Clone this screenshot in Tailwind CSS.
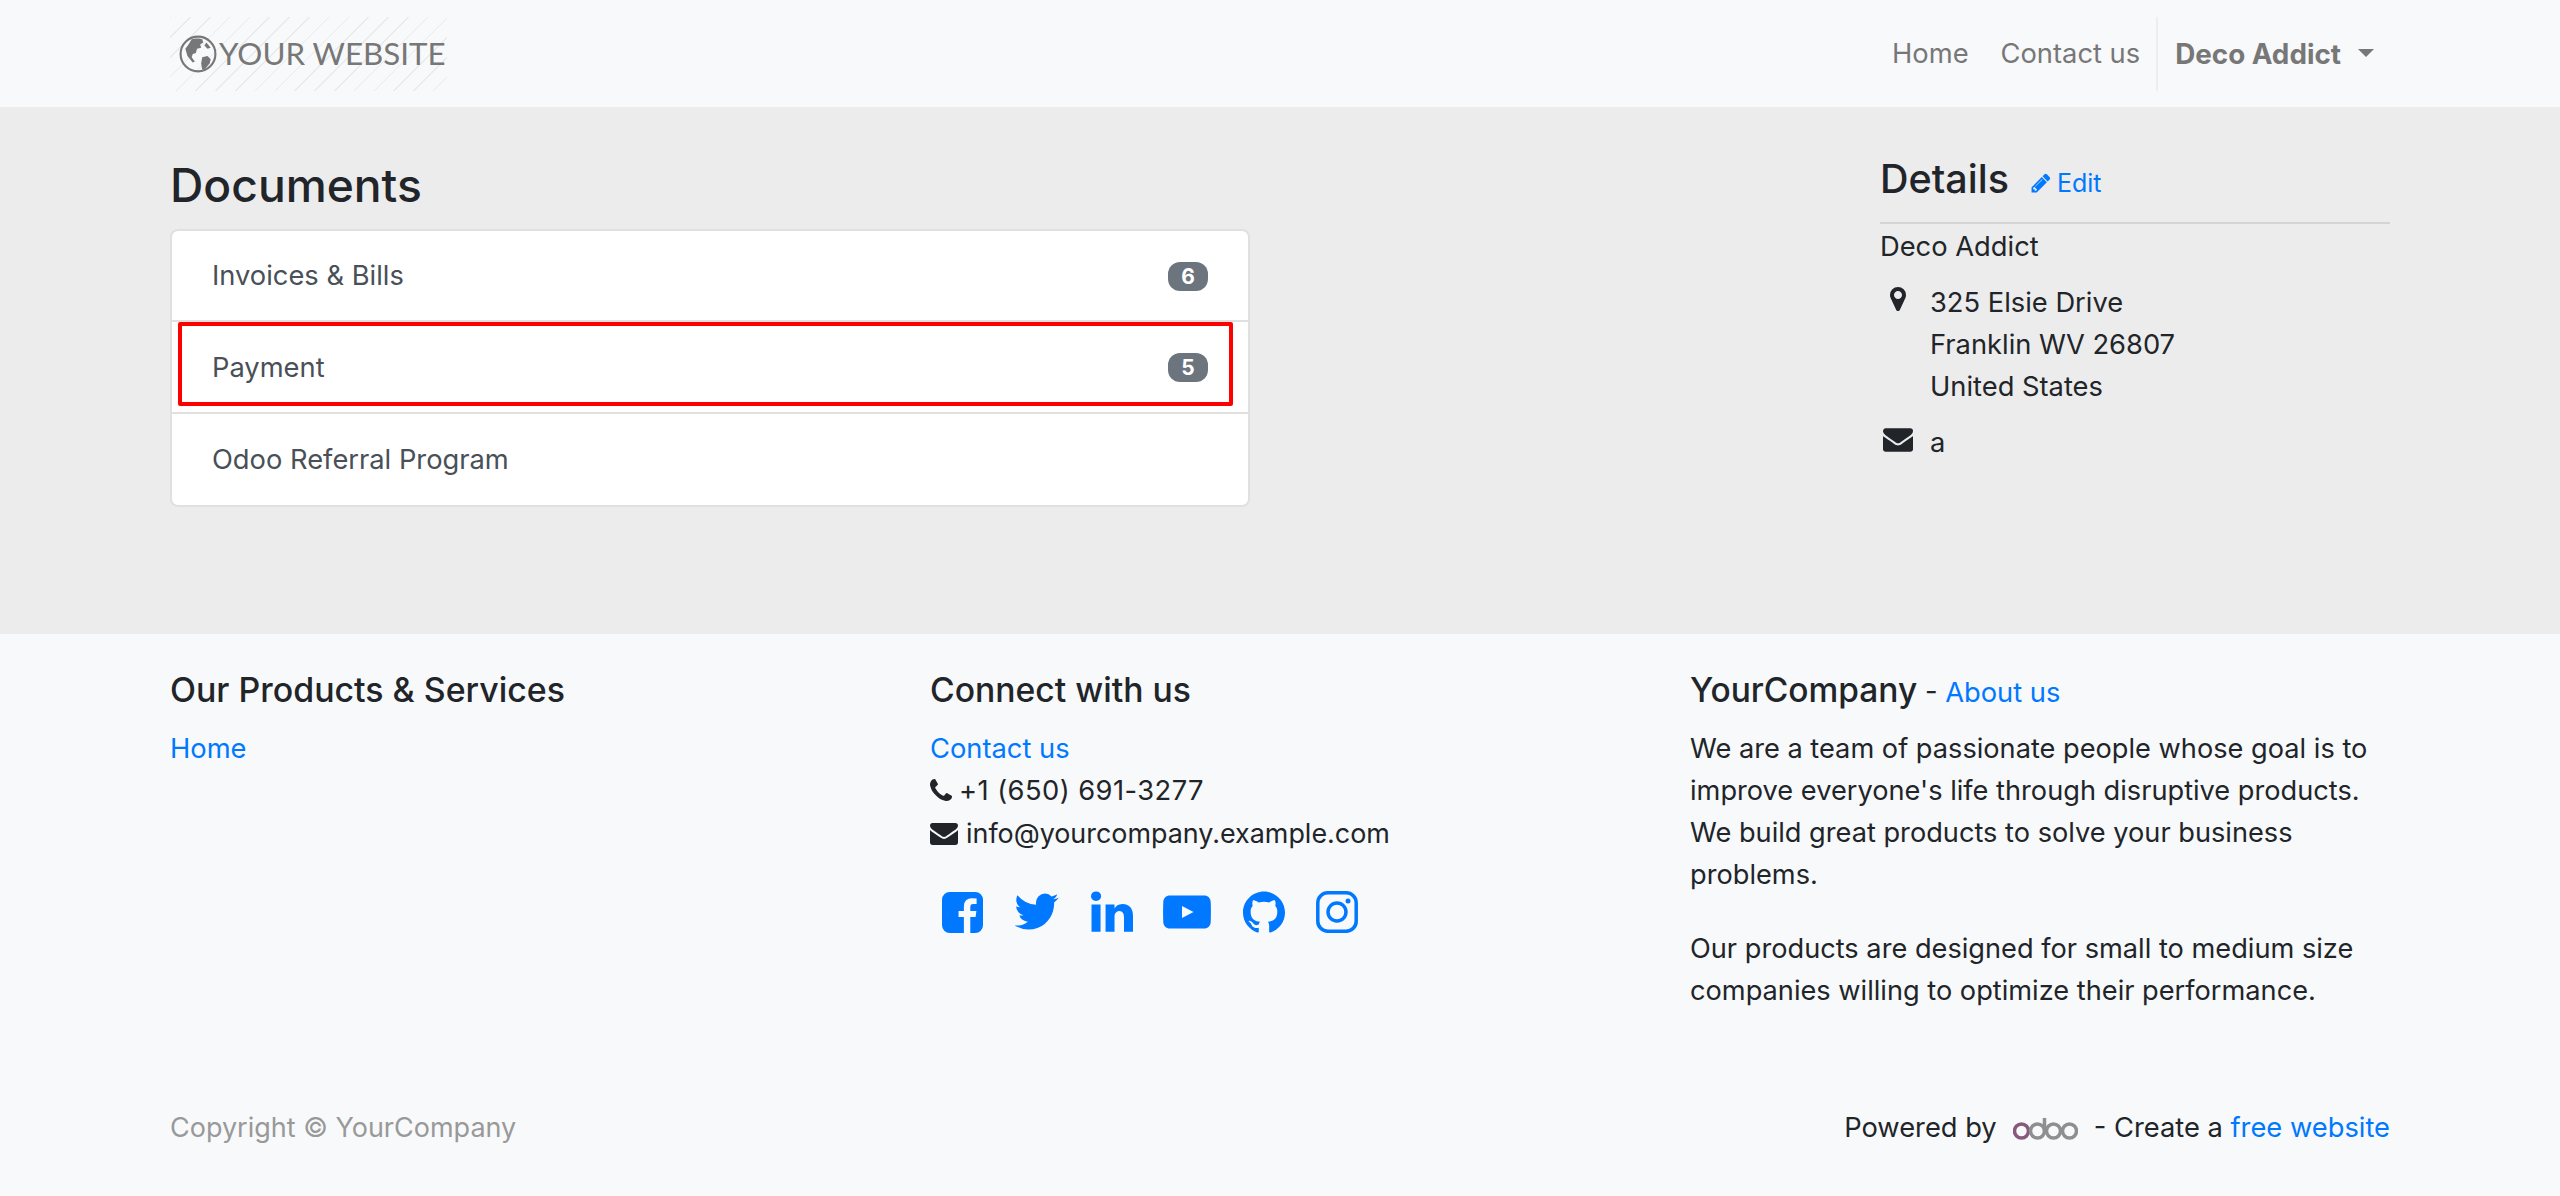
<!DOCTYPE html>
<html lang="en">
<head>
    <meta charset="UTF-8">
    <meta name="viewport" content="width=device-width, initial-scale=1.0">
    <title>Documents</title>
    <script src="https://cdn.jsdelivr.net/npm/@tailwindcss/browser@4"></script>
</head>
<body class="bg-[#f8f9fb] text-[#212529] font-[Inter,sans-serif] text-[27.3px] leading-[42px]">
    <!-- navbar -->
    <header class="h-[107px] px-[170px] flex items-center justify-between">
        <a class="w-[277px] h-[74px] flex items-center pl-[9px] gap-[2px] bg-[repeating-linear-gradient(135deg,#e8eaec_0,#e8eaec_1px,transparent_1px,transparent_14px)]">
            <svg class="w-[38px] h-[38px] shrink-0" viewBox="0 0 36 36" fill="#777">
                <circle cx="18" cy="18" r="16.500" fill="none" stroke="#777" stroke-width="2"/>
                <path d="M12 4c3-1 8-1 10 0l1 3-3 2 1 3-4 1-1 4-3 1-1 3 3 4-2 1-5-6-2-7 3-4z"/>
                <path d="M22 21l5-1 3 3-1 4-4 5-3 1-1-6z"/>
                <path d="M26 7l4 5-3 1-3-3z"/>
            </svg>
            <span class="font-[Lato,sans-serif] text-[31.3px] text-[#777] leading-none whitespace-nowrap">YOUR WEBSITE</span>
        </a>
        <nav class="flex items-center text-[#777] h-[74px]">
            <a class="mr-[32px] mt-[1px]">Home</a>
            <a class="mr-[16px] mt-[1px]">Contact us</a>
            <div class="w-[2px] h-[74px] bg-[#eceef0]"></div>
            <a class="ml-[17px] mt-[1px] font-bold text-[27.8px] flex items-center">Deco Addict<span class="ml-[17px] mb-[3px] border-t-[8px] border-x-[8px] border-t-[#777] border-x-transparent"></span></a>
            <div class="w-[16px]"></div>
        </nav>
    </header>

    <!-- portal content -->
    <main class="h-[527px] bg-[#ececec] px-[170px] flex justify-between">
        <section class="w-[1080px]">
            <h1 class="text-[46.2px] leading-[54px] font-medium mt-[51px] mb-[17px]">Documents</h1>
            <div class="relative bg-white border-2 border-[#e0e0e0] rounded-[8px] text-[#495057]">
                <div class="h-[91px] px-[40px] pt-[1px] flex items-center justify-between border-b-2 border-[#e0e0e0]">
                    <span>Invoices &amp; Bills</span>
                    <span class="w-[40px] h-[29px] rounded-[12px] bg-[#6c757d] text-white text-[21px] leading-[29px] font-bold text-center">6</span>
                </div>
                <div class="h-[92px] px-[40px] pt-[1px] flex items-center justify-between border-b-2 border-[#e0e0e0]">
                    <span>Payment</span>
                    <span class="w-[40px] h-[29px] rounded-[12px] bg-[#6c757d] text-white text-[21px] leading-[29px] font-bold text-center">5</span>
                </div>
                <div class="h-[91px] px-[40px] pt-[1px] flex items-center">
                    <span>Odoo Referral Program</span>
                </div>
                <!-- red highlight drawn over the row -->
                <div class="absolute left-[6px] right-[15px] top-[91px] h-[84px] border-[4px] border-[#ff0000] rounded-[2px]"></div>
            </div>
        </section>

        <aside class="w-[510px]">
            <div class="mt-[48px] h-[69px] flex items-start border-b-2 border-[#d4d4d4]">
                <h2 class="text-[39.5px] leading-[48px] font-medium">Details</h2>
                <a class="ml-[21px] mt-[9px] flex items-center text-[#0078ff] text-[25px] leading-[38px]">
                    <svg class="w-[22px] h-[22px] mr-[5px]" viewBox="0 0 1792 1792" fill="currentColor"><path d="M491 1536l91-91-235-235-91 91v107h128v128h107zm523-928q0-22-22-22-10 0-17 7l-542 542q-7 7-7 17 0 22 22 22 10 0 17-7l542-542q7-7 7-17zm-54-192l416 416-832 832h-416v-416zm683 96q0 53-37 90l-166 166-416-416 166-165q36-38 90-38 53 0 91 38l235 234q37 39 37 91z"/></svg>Edit
                </a>
            </div>
            <div class="mt-[2px]">Deco Addict</div>
            <div class="flex mt-[14px]">
                <div class="w-[50px] shrink-0 pt-[3px] pl-[4px]">
                    <svg class="w-[28px] h-[28px]" viewBox="0 0 1792 1792" fill="currentColor"><path d="M1152 640q0-106-75-181t-181-75-181 75-75 181 75 181 181 75 181-75 75-181zm256 0q0 109-33 179l-364 774q-16 33-47.500 52t-67.500 19-67.500-19-46.500-52l-365-774q-33-70-33-179 0-212 150-362t362-150 362 150 150 362z"/></svg>
                </div>
                <div>325 Elsie Drive<br>Franklin WV 26807<br>United States</div>
            </div>
            <div class="flex mt-[14px]">
                <div class="w-[50px] shrink-0 pt-[2px] pl-[3px]">
                    <svg class="w-[30px] h-[30px]" viewBox="0 0 1792 1792" fill="currentColor"><path d="M1792 710v794q0 66-47 113t-113 47h-1472q-66 0-113-47t-47-113v-794q44 49 101 87 362 246 497 345 57 42 92.500 65.500t94.500 48 110 24.500h2q51 0 110-24.500t94.500-48 92.500-65.500q170-123 498-345 57-39 100-87zm0-294q0 79-49 151t-122 123q-376 261-468 325-10 7-42.500 30.500t-54 38-52 32.500-57.500 27-50 9h-2q-23 0-50-9t-57.500-27-52-32.500-54-38-42.500-30.500q-91-64-262-182.500t-205-142.500q-62-42-117-115.500t-55-136.500q0-78 41.500-130t118.500-52h1472q65 0 112.500 47t47.500 113z"/></svg>
                </div>
                <div>a</div>
            </div>
        </aside>
    </main>

    <!-- footer -->
    <footer class="h-[562px] px-[170px] pt-[32px] flex flex-col">
        <div class="grid grid-cols-[760px_760px_700px]">
            <div>
                <h5 class="text-[33.9px] leading-[48px] font-medium mb-[14px]">Our Products &amp; Services</h5>
                <a class="block text-[#0078ff]">Home</a>
            </div>
            <div>
                <h5 class="text-[33.7px] leading-[48px] font-medium mb-[14px]">Connect with us</h5>
                <a class="block text-[#0078ff]">Contact us</a>
                <div class="flex items-center">
                    <svg class="w-[28px] h-[28px] mr-[4px] -ml-[3px]" viewBox="0 0 1792 1792" fill="currentColor"><path d="M1600 1240q0 27-10 70.500t-21 68.500q-21 50-122 106-94 51-186 51-27 0-53-3.500t-57.500-12.500-47-14.500-55.500-20.500-49-18q-98-35-175-83-127-79-264-216t-216-264q-48-77-83-175-3-9-18-49t-20.500-55.500-14.500-47-12.500-57.500-3.500-53q0-92 51-186 56-101 106-122 25-11 68.500-21t70.500-10q14 0 21 3 18 6 53 76 11 19 30 54t35 63.500 31 53.500q3 4 17.500 25t21.500 35.500 7 28.500q0 20-28.500 50t-62 55-62 53-28.500 46q0 9 5 22.500t8.500 20.500 14 24 11.500 19q76 137 174 235t235 174q2 1 19 11.500t24 14 20.500 8.500 22.500 5q18 0 46-28.500t53-62 55-62 50-28.500q14 0 28.500 7t35.500 21.500 25 17.500q25 15 53.500 31t63.500 35 54 30q70 35 76 53 3 7 3 21z"/></svg>
                    <span class="tracking-[0.45px]">+1 (650) 691-3277</span>
                </div>
                <div class="flex items-center">
                    <svg class="w-[28px] h-[28px] mr-[8px]" viewBox="0 0 1792 1792" fill="currentColor"><path d="M1792 710v794q0 66-47 113t-113 47h-1472q-66 0-113-47t-47-113v-794q44 49 101 87 362 246 497 345 57 42 92.500 65.500t94.500 48 110 24.500h2q51 0 110-24.500t94.500-48 92.500-65.500q170-123 498-345 57-39 100-87zm0-294q0 79-49 151t-122 123q-376 261-468 325-10 7-42.500 30.500t-54 38-52 32.500-57.500 27-50 9h-2q-23 0-50-9t-57.500-27-52-32.500-54-38-42.500-30.500q-91-64-262-182.500t-205-142.500q-62-42-117-115.500t-55-136.500q0-78 41.500-130t118.500-52h1472q65 0 112.500 47t47.500 113z"/></svg>
                    <span class="text-[26.9px]">info@yourcompany.example.com</span>
                </div>
                <div class="flex gap-[11px] mt-[37px] text-[#0078ff]">
                    <a class="w-[64px] h-[42px] flex justify-center items-center">
                        <svg class="w-[41px] h-[41px] ml-[1px]" viewBox="128 128 1536 1536" fill="currentColor"><path d="M1376 128q119 0 203.500 84.500t84.500 203.500v960q0 119-84.500 203.500t-203.500 84.500h-188v-595h199l30-232h-229v-148q0-56 23.500-84t91.500-28l122-1v-207q-63-9-178-9-136 0-217.500 80t-81.500 226v171h-200v232h200v595h-532q-119 0-203.500-84.500t-84.500-203.500v-960q0-119 84.500-203.500t203.500-84.500h960z"/></svg>
                    </a>
                    <a class="w-[64px] h-[42px] flex justify-center items-center">
                        <svg class="w-[44px] h-[44px]" viewBox="128 128 1568 1568" fill="currentColor"><path d="M1684 408q-67 98-162 167 1 14 1 42 0 130-38 259.500t-115.500 248.500-184.500 210.500-258 146-323 54.500q-271 0-496-145 35 4 76 4 225 0 401-138-105-2-188-64.500t-114-159.500q33 5 61 5 43 0 85-11-112-23-185.500-111.500t-73.500-205.500v-4q68 38 146 41-66-44-105-115t-39-154q0-88 44-163 121 149 294.500 238.500t371.500 99.500q-8-38-8-74 0-134 94.500-228.500t228.500-94.500q140 0 236 102 109-21 205-78-37 115-142 178 92-10 184-50z"/></svg>
                    </a>
                    <a class="w-[64px] h-[42px] flex justify-center items-center">
                        <svg class="w-[42px] h-[42px]" viewBox="128 128 1536 1536" fill="currentColor"><path d="M477 625v991h-330v-991h330zm21-306q1 73-50.500 122t-135.500 49h-2q-82 0-132-49t-50-122q0-74 51.500-122.500t134.500-48.500 133 48.500 51 122.500zm1166 729v568h-329v-530q0-105-40.500-164.500t-126.500-59.500q-63 0-105.500 34.500t-63.500 85.500q-11 30-11 81v553h-329q2-399 2-647t-1-296l-1-48h329v144h-2q20-32 41-56t56.500-52 87-43.500 114.500-15.500q171 0 275 113.500t104 332.500z"/></svg>
                    </a>
                    <a class="w-[64px] h-[42px] flex justify-center items-center">
                        <svg class="w-[48px] h-[34px]" viewBox="0 0 48 34" fill="currentColor"><path fill-rule="evenodd" d="M7 0.500h34c4 0 6.500 2.500 6.700 6.500.3 7 .3 13 0 20-.2 4-2.700 6.500-6.700 6.500H7c-4 0-6.500-2.500-6.700-6.500-.3-7-.3-13 0-20C.5 3 3 .5 7 .5zM19 11v12l11.500-6z"/></svg>
                    </a>
                    <a class="w-[64px] h-[42px] flex justify-center items-center">
                        <svg class="w-[42px] h-[42px] ml-[4px]" viewBox="0 0 24 24" fill="currentColor"><path d="M12 .297c-6.630 0-12 5.373-12 12 0 5.303 3.438 9.800 8.205 11.385.6.113.82-.258.82-.577 0-.285-.01-1.040-.015-2.040-3.338.724-4.042-1.610-4.042-1.610C4.422 18.070 3.633 17.700 3.633 17.700c-1.087-.744.084-.729.084-.729 1.205.084 1.838 1.236 1.838 1.236 1.070 1.835 2.809 1.305 3.495.998.108-.776.417-1.305.76-1.605-2.665-.3-5.466-1.332-5.466-5.930 0-1.310.465-2.380 1.235-3.220-.135-.303-.54-1.523.105-3.176 0 0 1.005-.322 3.300 1.230.96-.267 1.980-.399 3-.405 1.020.006 2.040.138 3 .405 2.280-1.552 3.285-1.230 3.285-1.230.645 1.653.24 2.873.12 3.176.765.84 1.230 1.910 1.230 3.220 0 4.610-2.805 5.625-5.475 5.920.42.36.81 1.096.81 2.220 0 1.606-.015 2.896-.015 3.286 0 .315.21.69.825.57C20.565 22.092 24 17.592 24 12.297c0-6.627-5.373-12-12-12"/></svg>
                    </a>
                    <a class="w-[64px] h-[42px] flex justify-center items-center">
                        <svg class="w-[42px] h-[42px]" viewBox="0 0 42 42" fill="none" stroke="currentColor" stroke-width="3.500"><rect x="1.800" y="1.800" width="38.400" height="38.400" rx="10"/><circle cx="21" cy="21" r="9"/><circle cx="32" cy="10" r="2.500" fill="currentColor" stroke="none"/></svg>
                    </a>
                </div>
            </div>
            <div>
                <h5 class="h-[48px] leading-[48px] mb-[14px] whitespace-nowrap"><span class="text-[33.5px] font-medium">YourCompany</span> - <a class="text-[#0078ff]">About us</a></h5>
                <p class="mb-[32px] text-[27.2px]">We are a team of passionate people whose goal is to improve everyone's life through disruptive products. We build great products to solve your business problems.</p>
                <p class="text-[27.2px]">Our products are designed for small to medium size companies willing to optimize their performance.</p>
            </div>
        </div>
        <div class="mt-[95px] flex justify-between items-center">
            <span class="text-[#999] text-[27px]">Copyright © YourCompany</span>
            <span class="flex items-center">Powered by
                <svg class="w-[65px] h-[26px] mx-[16px]" viewBox="0 0 65 26" fill="none" stroke-width="3.500"><circle cx="8.500" cy="16" r="7" stroke="#875a7b"/><circle cx="24.500" cy="16" r="7" stroke="#8f8f8f"/><path d="M31.500 3v13" stroke="#8f8f8f"/><circle cx="40.500" cy="16" r="7" stroke="#8f8f8f"/><circle cx="56.500" cy="16" r="7" stroke="#8f8f8f"/></svg>
                - Create a&nbsp;<a class="text-[#0078ff]">free website</a></span>
        </div>
    </footer>
</body>
</html>
